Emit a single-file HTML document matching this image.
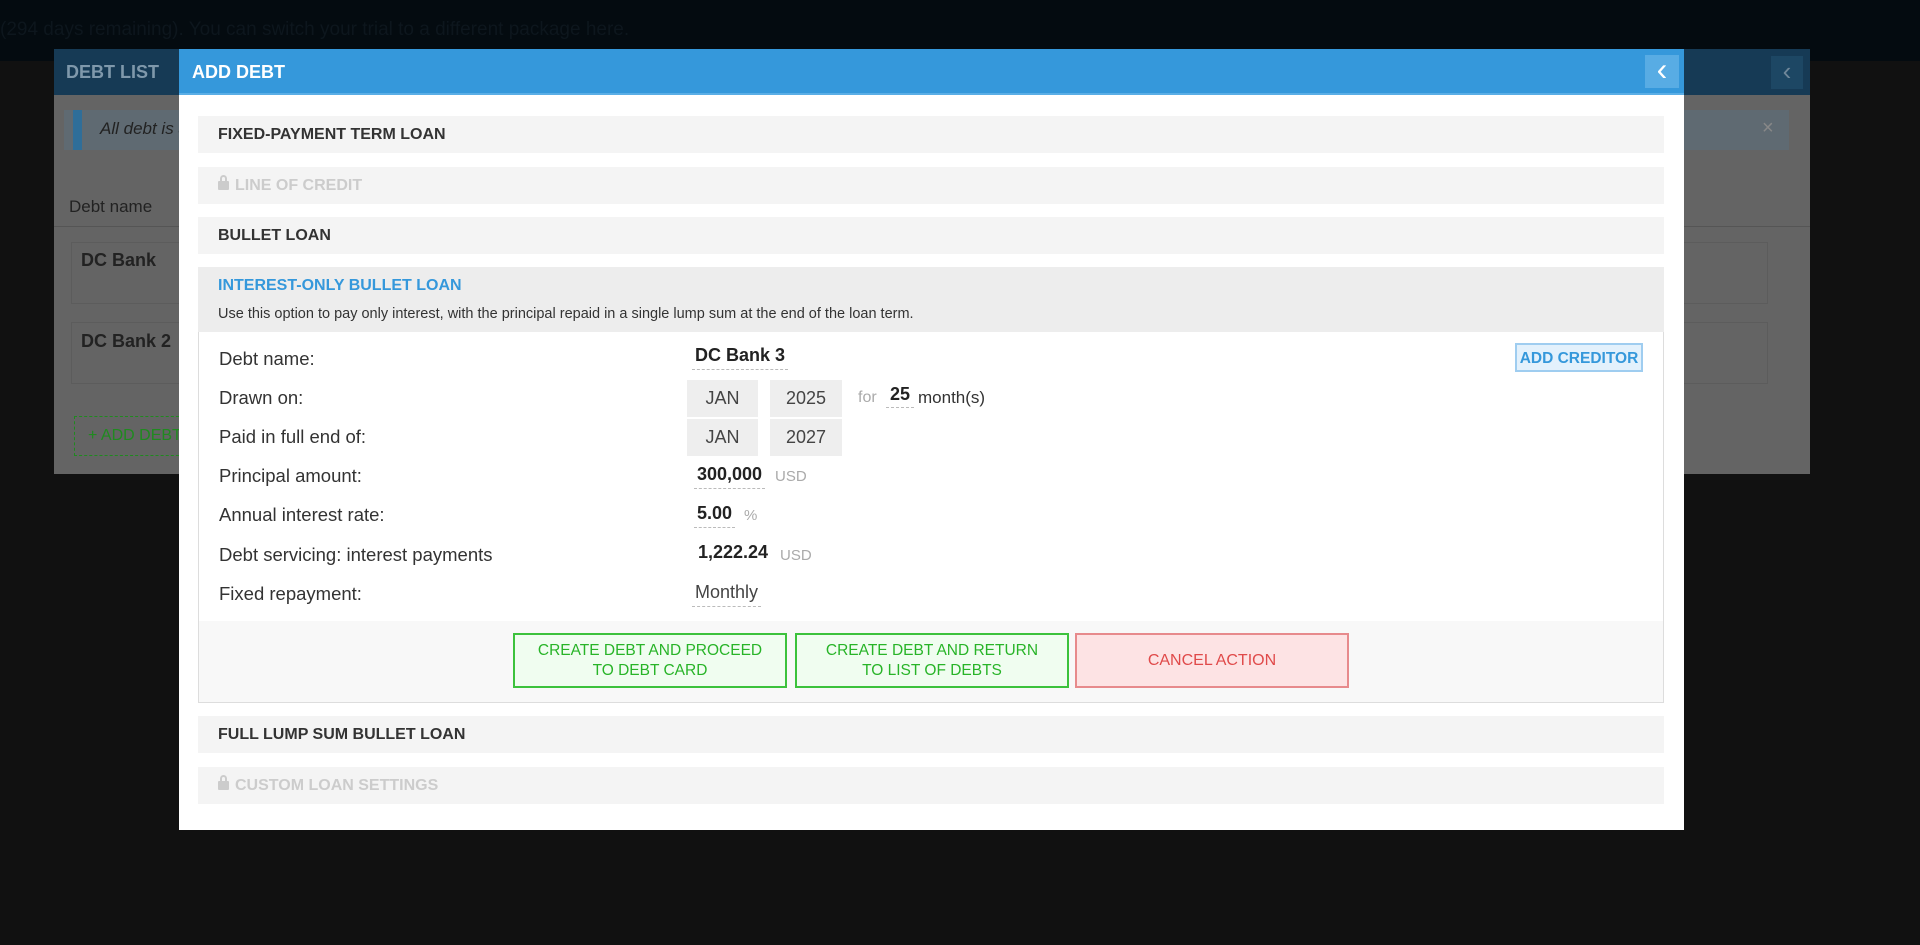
<!DOCTYPE html>
<html><head><meta charset="utf-8"><style>
*{box-sizing:border-box;margin:0;padding:0}
body{width:1920px;height:945px;background:#111;font-family:"Liberation Sans",Arial,sans-serif;position:relative;overflow:hidden}
.abs{position:absolute}
.top{left:0;top:0;width:1920px;height:61px;background:#040b10;color:#0d161d;font-size:19px;padding:19px 0 0 0}
.bg{left:54px;top:49px;width:1756px;height:425px;background:#646464}
.bgh{left:54px;top:49px;width:1756px;height:46px;background:#163a55;color:#7f98ab;font-weight:bold;font-size:18px;padding:13px 12px}
.modal{left:179px;top:49px;width:1505px;height:781px;background:#fff}
.mh{left:179px;top:49px;width:1505px;height:46px;background:#3598db;border-bottom:2px solid #5aaee6;color:#fff;font-weight:bold;font-size:18px;padding:13px 13px}
.sec{left:198px;width:1466px;height:37px;background:#f4f4f4;font-weight:bold;font-size:16px;color:#333;padding:10px 20px}
.lock{display:inline-block;width:11px;height:9px;background:#ccc;border-radius:1px;position:relative;margin-right:6px;top:0}
.lock:before{content:"";position:absolute;left:2px;top:-6px;width:7px;height:7px;border:2px solid #ccc;border-bottom:none;border-radius:4px 4px 0 0;box-sizing:border-box}
.lbl{left:219px;font-size:18.5px;color:#333}
.val{font-size:18px;color:#222;font-weight:bold;border-bottom:1px dashed #bbb;padding:0 3px 3px}
.box{height:37px;background:#eee;font-size:18px;color:#444;text-align:center;padding-top:8px}
.gray{color:#aaa;font-size:15px;font-weight:normal}
.btn{top:633px;height:55px;font-size:15.5px;text-align:center;display:flex;align-items:center;justify-content:center;line-height:20px}
.g{background:#f0fdf0;border:2px solid #3cc23c;color:#28b428}
.r{background:#fde3e4;border:2px solid #e78a8c;color:#e04a4a}
</style></head><body>
<div class="abs top">(294 days remaining). You can switch your trial to a different package here.</div>
<div class="abs bg"></div>
<div class="abs bgh">DEBT LIST</div>
<div class="abs" style="left:1771px;top:56px;width:32px;height:33px;background:#1d4764;color:#6f8799;font-size:26px;text-align:center;line-height:30px">&#8249;</div>
<div class="abs" style="left:64px;top:110px;width:1725px;height:40px;background:#5f6a72"></div>
<div class="abs" style="left:73px;top:110px;width:9px;height:40px;background:#2f6e99"></div>
<div class="abs" style="left:100px;top:119px;font-size:17px;font-style:italic;color:#222">All debt is a</div>
<div class="abs" style="left:1762px;top:117px;font-size:20px;color:#888">×</div>
<div class="abs" style="left:69px;top:197px;font-size:17px;color:#222">Debt name</div>
<div class="abs" style="left:54px;top:226px;width:1756px;height:1px;background:#555"></div>
<div class="abs" style="left:71px;top:242px;width:1697px;height:62px;border:1px solid #5c5c5c"></div>
<div class="abs" style="left:81px;top:250px;font-size:18px;font-weight:bold;color:#222">DC Bank</div>
<div class="abs" style="left:71px;top:322px;width:1697px;height:62px;border:1px solid #5c5c5c"></div>
<div class="abs" style="left:81px;top:331px;font-size:18px;font-weight:bold;color:#222">DC Bank 2</div>
<div class="abs" style="left:74px;top:416px;width:110px;height:40px;border:1px dashed #1f8a1f"></div>
<div class="abs" style="left:88px;top:427px;font-size:16px;color:#1f8a1f">+ ADD DEBT</div>

<div class="abs modal"></div>
<div class="abs mh">ADD DEBT</div>
<div class="abs" style="left:1645px;top:55px;width:34px;height:33px;background:#58ace4;color:#fff;font-size:32px;text-align:center;line-height:28px">&#8249;</div>

<div class="abs sec" style="top:116px">FIXED-PAYMENT TERM LOAN</div>
<div class="abs sec" style="top:167px;color:#ccc"><span class="lock"></span>LINE OF CREDIT</div>
<div class="abs sec" style="top:217px">BULLET LOAN</div>
<div class="abs" style="left:198px;top:267px;width:1466px;height:65px;background:#ededed;padding:10px 20px">
<div style="font-weight:bold;font-size:16px;color:#3598db">INTEREST-ONLY BULLET LOAN</div>
<div style="font-size:14.5px;color:#333;margin-top:11px">Use this option to pay only interest, with the principal repaid in a single lump sum at the end of the loan term.</div></div>
<div class="abs" style="left:198px;top:332px;width:1466px;height:371px;border:1px solid #ddd;border-top:none"></div>
<div class="abs" style="left:199px;top:621px;width:1464px;height:81px;background:#f8f8f8"></div>

<div class="abs lbl" style="top:348px">Debt name:</div>
<div class="abs val" style="left:692px;top:345px">DC Bank 3</div>
<div class="abs" style="left:1515px;top:343px;width:128px;height:29px;background:#e3f1fc;border:2px solid #9fcdf0;color:#3598db;font-weight:bold;font-size:15.5px;text-align:center;padding-top:5px">ADD CREDITOR</div>

<div class="abs lbl" style="top:387px">Drawn on:</div>
<div class="abs box" style="left:687px;top:380px;width:71px">JAN</div>
<div class="abs box" style="left:770px;top:380px;width:72px">2025</div>
<div class="abs gray" style="left:858px;top:389px;font-size:16px">for</div>
<div class="abs val" style="left:886px;top:384px;padding:0 4px 2px">25</div>
<div class="abs" style="left:918px;top:388px;font-size:17px;color:#333">month(s)</div>

<div class="abs lbl" style="top:426px">Paid in full end of:</div>
<div class="abs box" style="left:687px;top:419px;width:71px">JAN</div>
<div class="abs box" style="left:770px;top:419px;width:72px">2027</div>

<div class="abs lbl" style="top:465px">Principal amount:</div>
<div class="abs val" style="left:694px;top:464px">300,000</div>
<div class="abs gray" style="left:775px;top:468px">USD</div>

<div class="abs lbl" style="top:504px">Annual interest rate:</div>
<div class="abs val" style="left:694px;top:503px">5.00</div>
<div class="abs gray" style="left:744px;top:507px">%</div>

<div class="abs lbl" style="top:544px">Debt servicing: interest payments</div>
<div class="abs" style="left:698px;top:542px;font-size:18px;font-weight:bold;color:#222">1,222.24</div>
<div class="abs gray" style="left:780px;top:547px">USD</div>

<div class="abs lbl" style="top:583px">Fixed repayment:</div>
<div class="abs val" style="left:692px;top:582px;font-weight:normal;color:#444">Monthly</div>

<div class="abs btn g" style="left:513px;width:274px">CREATE DEBT AND PROCEED<br>TO DEBT CARD</div>
<div class="abs btn g" style="left:795px;width:274px">CREATE DEBT AND RETURN<br>TO LIST OF DEBTS</div>
<div class="abs btn r" style="left:1075px;width:274px;font-size:16px">CANCEL ACTION</div>

<div class="abs sec" style="top:716px">FULL LUMP SUM BULLET LOAN</div>
<div class="abs sec" style="top:767px;color:#ccc"><span class="lock"></span>CUSTOM LOAN SETTINGS</div>
</body></html>
